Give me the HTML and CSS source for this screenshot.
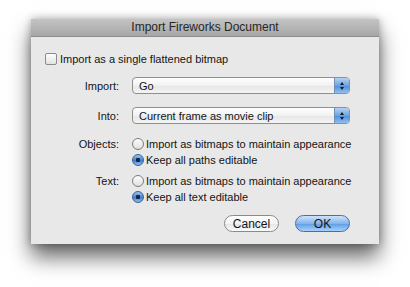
FILE: index.html
```html
<!DOCTYPE html>
<html lang="en">
<head>
    <meta charset="UTF-8">
    <title>Import Fireworks Document</title>
    <link rel="stylesheet" href="styles.css">
</head>
<body>
    <div class="dialog">
        <div class="titlebar">Import Fireworks Document</div>
        <div class="content">
            <label class="check-row">
                <span class="checkbox"></span>
                <span>Import as a single flattened bitmap</span>
            </label>

            <div class="row popup-row first">
                <span class="label">Import:</span>
                <div class="popup">
                    <span>Go</span>
                    <span class="arrows"><span class="up"></span><span class="down"></span></span>
                </div>
            </div>

            <div class="row popup-row">
                <span class="label">Into:</span>
                <div class="popup">
                    <span>Current frame as movie clip</span>
                    <span class="arrows"><span class="up"></span><span class="down"></span></span>
                </div>
            </div>

            <div class="row radio-group">
                <span class="label">Objects:</span>
                <div class="radios">
                    <div class="radio-row"><span class="radio"></span>Import as bitmaps to maintain appearance</div>
                    <div class="radio-row"><span class="radio on"></span>Keep all paths editable</div>
                </div>
            </div>

            <div class="row radio-group second">
                <span class="label">Text:</span>
                <div class="radios">
                    <div class="radio-row"><span class="radio"></span>Import as bitmaps to maintain appearance</div>
                    <div class="radio-row"><span class="radio on"></span>Keep all text editable</div>
                </div>
            </div>

            <div class="buttons">
                <button class="btn">Cancel</button>
                <button class="btn default">OK</button>
            </div>
        </div>
    </div>
</body>
</html>
```
FILE: styles.css
```css
html, body {
    height: 100%;
}

body {
    margin: 0;
    padding: 19px 0 0 31px;
    box-sizing: border-box;
    background-color: #fff;
    font-family: 'Liberation Sans', Arial, sans-serif;
    font-size: 11px;
    color: #141414;
}

.dialog {
    width: 348px;
    height: 225px;
    background-color: #e8e8e8;
    box-shadow: 0 13px 20px rgba(0, 0, 0, 0.6), 0 0 8px rgba(0, 0, 0, 0.3);
}

.titlebar {
    height: 17px;
    line-height: 17px;
    text-align: center;
    font-size: 12px;
    color: #262626;
    background: linear-gradient(#c4c4c4, #a6a6a6);
    border-bottom: 1px solid #8c8c8c;
}

.content {
    padding: 16px 29px 0 14px;
}

.check-row {
    display: flex;
    align-items: center;
    gap: 3px;
    height: 12px;
}

.checkbox {
    width: 10px;
    height: 10px;
    border: 1px solid #8a8a8a;
    border-radius: 2px;
    background: linear-gradient(#fdfdfd, #e2e2e2);
}

.row {
    display: flex;
}

.label {
    flex-shrink: 0;
    width: 74px;
    margin-right: 13px;
    text-align: right;
}

.popup-row {
    align-items: center;
    height: 17px;
    margin-top: 13px;
}

.popup-row.first {
    margin-top: 12px;
}

.popup {
    flex: 1;
    height: 15px;
    display: flex;
    align-items: center;
    justify-content: space-between;
    padding-left: 6px;
    border: 1px solid #8f8f8f;
    border-radius: 4px;
    background: linear-gradient(#ffffff, #f1f1f1 50%, #e6e6e6 51%, #f4f4f4);
    overflow: hidden;
}

.arrows {
    width: 14px;
    height: 15px;
    display: flex;
    flex-direction: column;
    align-items: center;
    justify-content: center;
    gap: 2px;
    border-left: 1px solid #6f8fb8;
    background: linear-gradient(#b5d2f3, #6ea3e2 50%, #4f8bd8 51%, #8ec0f2);
}

.up, .down {
    width: 0;
    height: 0;
    border-left: 2px solid transparent;
    border-right: 2px solid transparent;
}

.up {
    border-bottom: 3px solid #1a1a1a;
}

.down {
    border-top: 3px solid #1a1a1a;
}

.radio-group {
    margin-top: 12px;
}

.radio-group.second {
    margin-top: 5px;
}

.radio-group .label {
    line-height: 16px;
}

.radio-row {
    display: flex;
    align-items: center;
    gap: 2px;
    height: 16px;
    white-space: nowrap;
}

.radio {
    width: 10px;
    height: 10px;
    border: 1px solid #7d7d7d;
    border-radius: 50%;
    background: linear-gradient(#fdfdfd, #e0e0e0);
}

.radio.on {
    border-color: #3c5f91;
    background: radial-gradient(circle, #1b2533 0 2px, transparent 2.5px), linear-gradient(#9cc3f0, #3f7fd6 55%, #8bc0f5);
}

.buttons {
    display: flex;
    justify-content: flex-end;
    gap: 16px;
    margin-top: 10px;
}

.btn {
    width: 55px;
    height: 17px;
    padding: 0;
    font-family: inherit;
    font-size: 12px;
    color: #141414;
    border: 1px solid #8a8a8a;
    border-radius: 9px;
    background: linear-gradient(#ffffff, #f3f3f3 50%, #e4e4e4 51%, #fafafa);
}

.btn.default {
    border-color: #4a6e9e;
    background: linear-gradient(#cfe3fa, #83b4ee 50%, #5e9ae6 51%, #a6d3fb);
}
```
